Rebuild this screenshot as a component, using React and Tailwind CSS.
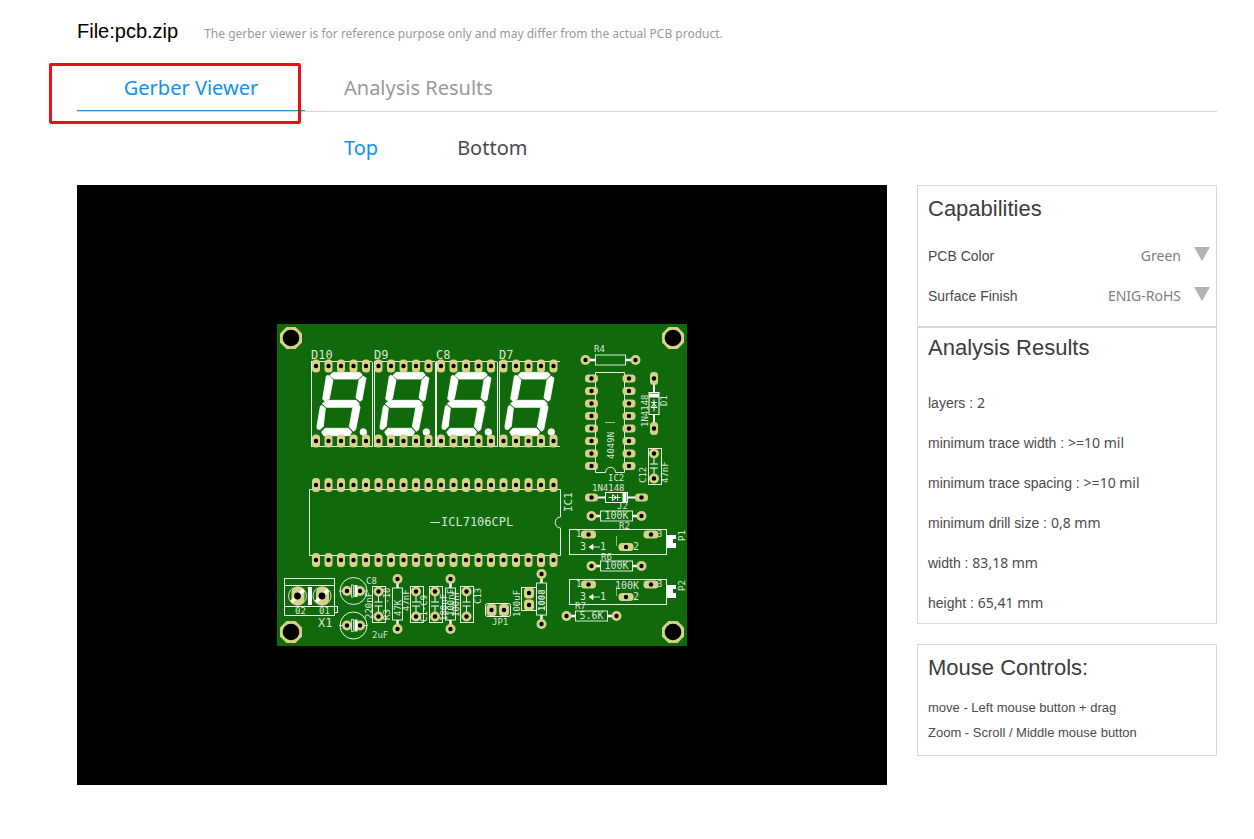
import { useState } from 'react';

const PAD = '#d8d18a';
const SILK = '#ffffff';

// Pin columns shared by the displays and the 40 pin chip
const columns = Array.from({ length: 20 }, (_, i) => 39 + i * 12.5);
const rows = Array.from({ length: 8 }, (_, i) => 54.5 + i * 12.5);

const analysis = [
  { label: 'layers', value: '2' },
  { label: 'minimum trace width', value: '>=10 mil' },
  { label: 'minimum trace spacing', value: '>=10 mil' },
  { label: 'minimum drill size', value: '0,8 mm' },
  { label: 'width', value: '83,18 mm' },
  { label: 'height', value: '65,41 mm' },
];

function Pad({ x, y, w = 10, h = 10 }) {
  const rx = w === h ? w / 2 : 3.5;
  return (
    <g>
      <rect x={x - w / 2} y={y - h / 2} width={w} height={h} rx={rx} fill={PAD} />
      <circle cx={x} cy={y} r="2.2" fill="#000" />
    </g>
  );
}

function MountHole({ x, y }) {
  return (
    <g transform={`translate(${x} ${y})`}>
      <path d="M-4.5-11h9L11-4.5v9L4.5 11h-9L-11 4.5v-9z" fill={PAD} />
      <circle r="8.3" fill="#000" />
    </g>
  );
}

function Label({ x, y, size = 9, vertical, bold, children }) {
  return (
    <text
      transform={`translate(${x} ${y})${vertical ? ' rotate(-90)' : ''}`}
      fontSize={size}
      fontWeight={bold ? 700 : 400}
      fill={SILK}
      fillOpacity="0.85"
    >
      {children}
    </text>
  );
}

function Box({ x, y, w, h }) {
  return (
    <rect x={x + 0.5} y={y + 0.5} width={w} height={h} fill="none" stroke={SILK} strokeOpacity="0.9" shapeRendering="crispEdges" />
  );
}

function Digit({ x, name, closed }) {
  return (
    <g>
      <path
        d={`M${x + 61} 37.5H${x + 0.5}V122.5H${x + 61}${closed ? 'V37.5' : ''}`}
        fill="none"
        stroke={SILK}
        strokeOpacity="0.9"
        shapeRendering="crispEdges"
      />
      <g transform={`translate(${x} 37) scale(0.3333)`} fill={SILK} stroke={SILK} strokeWidth="2.5" strokeLinejoin="round">
        <path d="M66 34H147L154 42 142 54H69L57 43z" />
        <path d="M49 43L57 46 66 57 55 114 42 121 35 114 46 46z" />
        <path d="M165 51L153 117 147 121 135 111 144 57 156 46z" />
        <path d="M34 128L47 118H135L145 128 135 139H47z" />
        <path d="M32 133L43 141 37 196 27 206 19 204 18 196 28 136z" />
        <path d="M145 133L147 140 134 206 127 211 115 197 125 141z" />
        <path d="M32 213L42 202H112L122 213 116 224H38z" />
        <circle cx="157" cy="213" r="10" />
      </g>
      <Label x={x} y={34.5} size={12}>{name}</Label>
    </g>
  );
}

function Resistor({ x, y, span = 50, body = 32, value, size = 9, vertical, bold }) {
  const half = span / 2;
  return (
    <g transform={`translate(${x} ${y})${vertical ? ' rotate(-90)' : ''}`}>
      <path d={`M${-half} 0H${-body / 2}M${body / 2} 0H${half}`} stroke={SILK} strokeWidth="2.5" />
      <rect x={-body / 2} y="-5" width={body} height="10" fill="none" stroke={SILK} strokeOpacity="0.85" />
      <Pad x={-half} y={0} />
      <Pad x={half} y={0} />
      {value && <Label x={-12} y={3} size={size} bold={bold}>{value}</Label>}
    </g>
  );
}

function Diode({ x, y, vertical }) {
  return (
    <g transform={`translate(${x} ${y})${vertical ? ' rotate(-90)' : ''}`}>
      <path d="M-25 0H-11M11 0H25" stroke={SILK} strokeWidth="2" />
      <rect x="-11" y="-5" width="22" height="10" fill="none" stroke={SILK} />
      <rect x="6" y="-5" width="4" height="10" fill={SILK} />
      <path d="M-8 0H4M-4-3V3L0 0zM1-3V3" fill="none" stroke={SILK} />
      <Pad x={-25} y={0} w={13} h={8} />
      <Pad x={25} y={0} w={13} h={8} />
    </g>
  );
}

function Capacitor({ x, y }) {
  return (
    <g>
      <Box x={x - 6.5} y={y - 18} w={13} h={36} />
      <path d={`M${x} ${y - 8}V${y - 2}M${x} ${y + 2}V${y + 8}M${x - 4} ${y - 2}h8M${x - 4} ${y + 2}h8`} stroke={SILK} fill="none" />
      <Pad x={x} y={y - 12.5} />
      <Pad x={x} y={y + 12.5} />
    </g>
  );
}

function Electrolytic({ x, y }) {
  return (
    <g>
      <circle cx={x} cy={y} r="13.5" fill="none" stroke={SILK} strokeOpacity="0.9" />
      <path d={`M${x - 14} ${y}h4M${x + 10} ${y}h4`} stroke={SILK} />
      <Pad x={x - 6.5} y={y} />
      <Pad x={x + 6.5} y={y} />
      <rect x={x - 2} y={y - 6} width="2" height="12" fill="#106a0b" stroke={SILK} strokeWidth="0.7" />
      <rect x={x + 1} y={y - 6} width="3" height="12" fill={SILK} />
    </g>
  );
}

function Trimmer({ y, name, value }) {
  return (
    <g>
      <Box x={292} y={y} w={97} h={25} />
      <Label x={299} y={y + 8}>1</Label>
      <Label x={380} y={y + 8}>3</Label>
      <Label x={303} y={y + 21} size={10}>3</Label>
      <Label x={323} y={y + 21} size={10}>1</Label>
      <Label x={356} y={y + 21} size={10}>2</Label>
      <path d={`M313 ${y + 18}h10M316 ${y + 15.5}v5l-4-2.5z`} stroke={SILK} fill={SILK} strokeWidth="0.8" />
      <path d={`M339.5 ${y + 7}v10`} stroke={SILK} strokeOpacity="0.5" />
      <path d={`M390 ${y + 6}h9v4h-3v4h3v5h-9z`} fill={SILK} />
      <Pad x={311.5} y={y + 5.5} w={15} h={8} />
      <Pad x={374} y={y + 5.5} w={15} h={8} />
      <Pad x={349} y={y + 18} w={15} h={8} />
      {value && <Label x={338} y={y + 10} size={10}>{value}</Label>}
      <Label x={408} y={y + 12} vertical>{name}</Label>
    </g>
  );
}

function Terminal() {
  return (
    <g>
      <Box x={7} y={254} w={50} h={37} />
      <path d="M7 261.5H58M7 282.5H60.5V288.5H58" fill="none" stroke={SILK} shapeRendering="crispEdges" />
      <rect x="31" y="263" width="4" height="18" fill={SILK} />
      {[20.5, 45].map((x) => (
        <g key={x}>
          <circle cx={x} cy="272" r="9" fill="none" stroke={SILK} strokeWidth="0.8" />
          <rect x={x - 6} y="262.5" width="13" height="19" rx="6" fill={PAD} />
          <path d={`M${x - 6} 278L${x + 6} 266`} stroke={SILK} strokeWidth="3.5" />
          <circle cx={x} cy="272" r="3.4" fill="#000" />
        </g>
      ))}
      <Label x={18} y={290}>02</Label>
      <Label x={42} y={290}>01</Label>
      <Label x={41} y={303} size={12}>X1</Label>
    </g>
  );
}

function Board() {
  return (
    <svg
      viewBox="-200 -139 810 600"
      className="block h-auto w-full bg-black"
      fontFamily="'DejaVu Sans Mono', 'Liberation Mono', monospace"
      role="img"
      aria-label="PCB top side"
    >
      <rect width="410" height="322" fill="#106a0b" />
      <MountHole x={14} y={14} />
      <MountHole x={396} y={14} />
      <MountHole x={14} y={308} />
      <MountHole x={396} y={308} />

      <Digit x={34} name="D10" closed />
      <Digit x={97} name="D9" closed />
      <Digit x={159} name="C8" closed />
      <Digit x={222} name="D7" />

      {/* IC1 */}
      <path
        d="M283.5 193V165.5H32.5V231.5H283.5V204c-7 0-7-11 0-11"
        fill="none"
        stroke={SILK}
        strokeOpacity="0.9"
      />
      <path d="M153 198.5h10" stroke={SILK} strokeOpacity="0.8" />
      <Label x={164} y={202} size={12}>ICL7106CPL</Label>
      <Label x={294.5} y={188} size={11} vertical>IC1</Label>
      {columns.map((x) => (
        <g key={x}>
          <Pad x={x} y={42} w={8} h={13} />
          <Pad x={x} y={117} w={8} h={13} />
          <Pad x={x} y={161} w={8} h={14} />
          <Pad x={x} y={236} w={8} h={14} />
        </g>
      ))}

      {/* IC2 */}
      <path
        d="M328.5 148.5H318.5V48.5H347.5V148.5H338.5c0-7-10-7-10 0"
        fill="none"
        stroke={SILK}
        strokeOpacity="0.9"
      />
      <path d="M328 98.5h10" stroke={SILK} strokeOpacity="0.6" />
      <Label x={336.5} y={135} vertical>4049N</Label>
      <Label x={331} y={157}>IC2</Label>
      {rows.map((y) => (
        <g key={y}>
          <Pad x={314.5} y={y} w={13} h={8} />
          <Pad x={352} y={y} w={13} h={8} />
        </g>
      ))}

      <Resistor x={333.5} y={36} body={30} />
      <Label x={317} y={28}>R4</Label>

      <Diode x={377} y={79.5} vertical />
      <Label x={370.5} y={103} vertical>1N4148</Label>
      <Label x={390} y={82} vertical>D1</Label>

      <Capacitor x={377} y={142} />
      <Label x={369} y={159} vertical>C12</Label>
      <Label x={391} y={159} vertical>47nF</Label>

      <Diode x={339.5} y={173.5} />
      <Label x={315} y={167}>1N4148</Label>
      <Label x={340} y={185}>J2</Label>
      <Resistor x={339.5} y={192} value="100K" size={10} />
      <Label x={342} y={205}>R2</Label>
      <Trimmer y={205} name="P1" />
      <Label x={324} y={236}>R6</Label>
      <Resistor x={339.5} y={242} value="100K" size={10} />
      <Trimmer y={255} name="P2" value="100K" />
      <Label x={298} y={285}>R7</Label>
      <Resistor x={314.5} y={292} value="5.6K" size={10} />

      <Terminal />

      <Electrolytic x={76.5} y={267} />
      <Electrolytic x={76.5} y={301.5} />
      <Label x={89} y={260}>C8</Label>
      <Label x={95} y={314}>2uF</Label>

      <Capacitor x={101.5} y={280} />
      <Label x={95} y={295} vertical>220nF</Label>
      <Resistor x={120.5} y={280} value="47K" vertical />
      <Label x={113} y={296} vertical>R3 -10</Label>
      <Label x={132} y={287} vertical>47nF</Label>
      <Capacitor x={139} y={280} />
      <Label x={150} y={298} vertical>C1-C9</Label>
      <Capacitor x={158} y={280} />
      <Resistor x={173.5} y={280} value="100nF" vertical />
      <Label x={170} y={297} vertical>180nF</Label>
      <Label x={182} y={293} vertical>100nF</Label>
      <Capacitor x={189.5} y={280} />
      <Label x={204} y={280} vertical>C13</Label>

      <rect x="208.5" y="279.5" width="25" height="13" rx="2" fill="none" stroke={SILK} />
      <Pad x={214.5} y={286} w={10} h={12} />
      <Pad x={227} y={286} w={10} h={12} />
      <Label x={215} y={301}>JP1</Label>

      <Box x={244} y={263} w={15} h={23} />
      <Pad x={252} y={269} w={10} h={11} />
      <Pad x={252} y={281} w={10} h={11} />
      <Label x={243} y={293} vertical>100uF</Label>
      <Resistor x={264.5} y={275} value="1008" vertical bold />
    </svg>
  );
}

function Panel({ title, className = '', children }) {
  return (
    <section className={`border border-[#d9d9d9] px-2.5 ${className}`}>
      <h2 className="text-[22px] leading-10 text-[#3c3c3c]">{title}</h2>
      {children}
    </section>
  );
}

function Option({ id, label, options }) {
  return (
    <div className="flex h-10 items-center">
      <label htmlFor={id} className="text-sm text-[#4a4a4a]">{label}</label>
      <div className="relative -mr-1 flex-1">
        <select
          id={id}
          className="w-full appearance-none bg-transparent pr-[29px] font-['Noto_Sans',sans-serif] text-sm text-[#808080] [text-align-last:right]"
        >
          {options.map((option) => (
            <option key={option}>{option}</option>
          ))}
        </select>
        <svg viewBox="0 0 16 14" className="pointer-events-none absolute top-[3px] right-0 h-3.5 w-4 fill-[#b3b3b3]">
          <path d="M0 0h16L8 14z" />
        </svg>
      </div>
    </div>
  );
}

function App() {
  const [tab, setTab] = useState('viewer');
  const [side, setSide] = useState('top');

  return (
    <div className="min-h-screen bg-white pr-[37px] pb-[54px] pl-[77px] font-['Liberation_Sans',Arial,sans-serif]">
      <header className="flex h-[66px] items-baseline gap-[26px] pt-4">
        <h1 className="text-xl leading-[30px] text-black">File:pcb.zip</h1>
        <p className="font-['Noto_Sans',sans-serif] text-xs text-[#999]">
          The gerber viewer is for reference purpose only and may differ from the actual PCB product.
        </p>
      </header>

      <nav className="relative flex border-b border-[#d4d4d4] font-['Noto_Sans',sans-serif] text-xl">
        <button
          type="button"
          onClick={() => setTab('viewer')}
          className={`h-[45px] w-[228px] border-b ${tab === 'viewer' ? 'border-[#2a8fc4] text-[#1292ee]' : 'border-transparent text-[#999]'}`}
        >
          Gerber Viewer
        </button>
        <button
          type="button"
          onClick={() => setTab('analysis')}
          className={`h-[45px] border-b px-[39px] ${tab === 'analysis' ? 'border-[#2a8fc4] text-[#1292ee]' : 'border-transparent text-[#999]'}`}
        >
          Analysis Results
        </button>
        <div className="pointer-events-none absolute -top-[3px] -left-7 h-[61px] w-[252px] rounded-xs border-3 border-[#ea1218]" />
      </nav>

      <div className="flex h-[73px] items-center gap-[79px] pb-0.5 pl-[267px] font-['Noto_Sans',sans-serif] text-xl">
        <button type="button" onClick={() => setSide('top')} className={side === 'top' ? 'text-[#1292ee]' : 'text-[#4a4a4a]'}>
          Top
        </button>
        <button type="button" onClick={() => setSide('bottom')} className={side === 'bottom' ? 'text-[#1292ee]' : 'text-[#4a4a4a]'}>
          Bottom
        </button>
      </div>

      <div className="flex items-start gap-[30px]">
        <main className="min-w-0 flex-1">
          <Board />
        </main>

        <aside className="w-[300px] shrink-0">
          <Panel title="Capabilities" className="pt-[3px] pb-2.5">
            <div className="mt-[7px]">
              <Option id="pcb-color" label="PCB Color" options={['Green', 'Red', 'Blue', 'Black', 'White']} />
              <Option id="surface-finish" label="Surface Finish" options={['ENIG-RoHS', 'HASL', 'OSP']} />
            </div>
          </Panel>

          <Panel title="Analysis Results">
            <ul className="mt-[15px] text-sm text-[#4a4a4a]">
              {analysis.map(({ label, value }) => (
                <li key={label} className="leading-10">
                  {label} : <span className="font-['Noto_Sans',sans-serif]">{value}</span>
                </li>
              ))}
            </ul>
          </Panel>

          <Panel title="Mouse Controls:" className="mt-5 pt-[3px] pb-2.5">
            <div className="mt-[7px] text-[13px] leading-[25px] text-[#4a4a4a]">
              <p>move - Left mouse button + drag</p>
              <p>Zoom - Scroll / Middle mouse button</p>
            </div>
          </Panel>
        </aside>
      </div>
    </div>
  );
}

export default App;
